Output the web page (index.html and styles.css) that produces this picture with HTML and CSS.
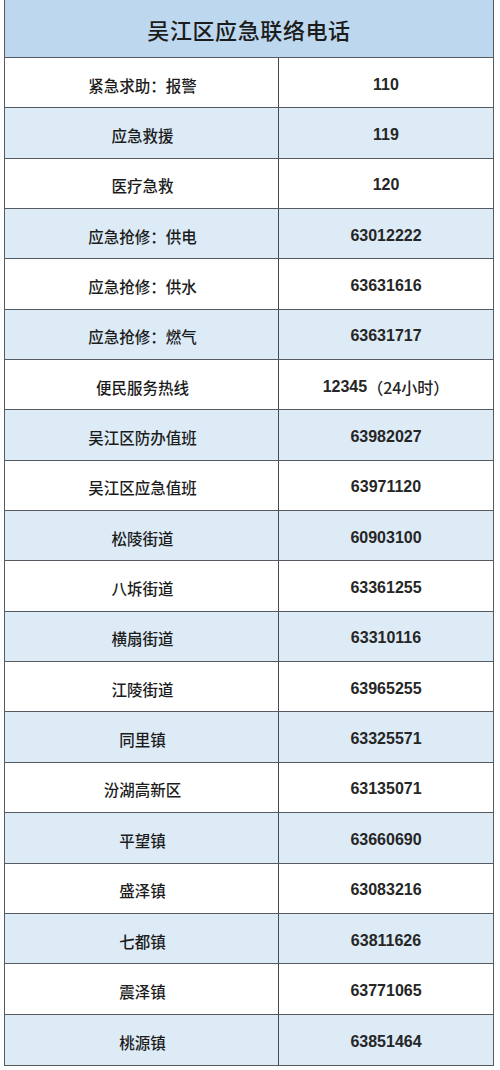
FILE: index.html
```html
<!DOCTYPE html>
<html lang="zh-CN">
<head>
<meta charset="utf-8">
<link rel="stylesheet" href="styles.css">
</head>
<body>
<div class="sheet">
  <div class="title">吴江区应急联络电话</div>
  <div class="row"><div class="name">紧急求助：报警</div><div class="num">110</div></div>
  <div class="row alt"><div class="name">应急救援</div><div class="num">119</div></div>
  <div class="row"><div class="name">医疗急救</div><div class="num">120</div></div>
  <div class="row alt"><div class="name">应急抢修：供电</div><div class="num">63012222</div></div>
  <div class="row"><div class="name">应急抢修：供水</div><div class="num">63631616</div></div>
  <div class="row alt"><div class="name">应急抢修：燃气</div><div class="num">63631717</div></div>
  <div class="row"><div class="name">便民服务热线</div><div class="num">12345<span class="cjk">（24小时）</span></div></div>
  <div class="row alt"><div class="name">吴江区防办值班</div><div class="num">63982027</div></div>
  <div class="row"><div class="name">吴江区应急值班</div><div class="num">63971120</div></div>
  <div class="row alt"><div class="name">松陵街道</div><div class="num">60903100</div></div>
  <div class="row"><div class="name">八坼街道</div><div class="num">63361255</div></div>
  <div class="row alt"><div class="name">横扇街道</div><div class="num">63310116</div></div>
  <div class="row"><div class="name">江陵街道</div><div class="num">63965255</div></div>
  <div class="row alt"><div class="name">同里镇</div><div class="num">63325571</div></div>
  <div class="row"><div class="name">汾湖高新区</div><div class="num">63135071</div></div>
  <div class="row alt"><div class="name">平望镇</div><div class="num">63660690</div></div>
  <div class="row"><div class="name">盛泽镇</div><div class="num">63083216</div></div>
  <div class="row alt"><div class="name">七都镇</div><div class="num">63811626</div></div>
  <div class="row"><div class="name">震泽镇</div><div class="num">63771065</div></div>
  <div class="row alt"><div class="name">桃源镇</div><div class="num">63851464</div></div>
</div>
</body>
</html>
```
FILE: styles.css
```css
html, body {
  margin: 0;
  padding: 0;
  background: #ffffff;
}
body {
  font-family: "Noto Sans CJK SC", sans-serif;
  color: #1c1c1c;
}
.sheet {
  width: 490px;
  margin-left: 4px;
  border-left: 1.5px solid #555a60;
  border-right: 1.5px solid #555a60;
  border-bottom: 1.5px solid #555a60;
  box-sizing: border-box;
}
.title {
  height: 58px;
  box-sizing: border-box;
  border-bottom: 1.5px solid #555a60;
  background: #bdd7ee;
  display: flex;
  align-items: center;
  justify-content: center;
  font-size: 22px;
  font-weight: 500;
  letter-spacing: 0.6px;
  padding-top: 1px;
}
.row {
  display: grid;
  grid-template-columns: 274px 1fr;
  height: 50.35px;
  box-sizing: border-box;
  border-bottom: 1.5px solid #555a60;
  background: #ffffff;
}
.row:last-child {
  border-bottom: none;
}
.row.alt {
  background: #ddebf7;
}
.name, .num {
  display: flex;
  align-items: center;
  justify-content: center;
  padding-top: 4px;
}
.name {
  border-right: 1.5px solid #45494e;
  font-size: 15.5px;
  font-weight: 500;
  padding-left: 2px;
}
.num {
  font-family: "Liberation Sans", "Noto Sans CJK SC", sans-serif;
  font-size: 16px;
  font-weight: 700;
  color: #262626;
}
.cjk {
  font-family: "Noto Sans CJK SC", sans-serif;
  font-weight: 500;
}
```
